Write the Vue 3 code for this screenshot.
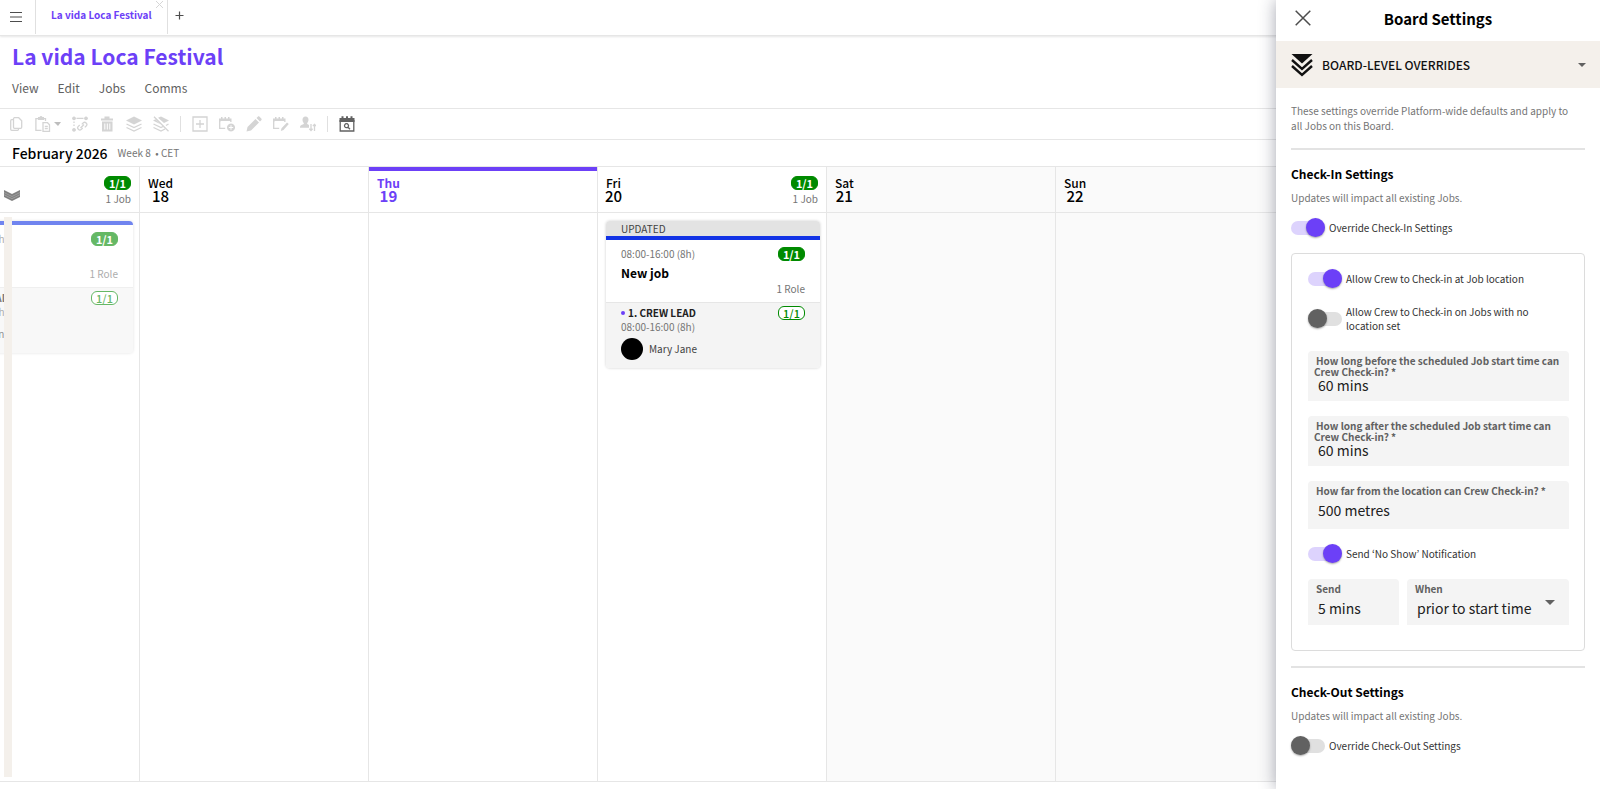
<template>
  <div class="app">
    <nav class="tabs">
      <button class="menu-btn" type="button" aria-label="Menu">
        <svg width="14" height="12" viewBox="0 0 14 12" stroke="#4d4d4d" stroke-width="1.2">
          <path d="M1 1.5h12M1 6h12M1 10.5h12" />
        </svg>
      </button>
      <div class="tab">
        <a href="#">{{ board }}</a>
        <button class="tab-close" type="button" aria-label="Close tab">
          <svg width="9" height="9" viewBox="0 0 9 9" stroke="#d6d6d6"><path d="M1 1l7 7M8 1l-7 7" /></svg>
        </button>
      </div>
      <button class="tab-add" type="button" aria-label="Add tab">
        <svg width="9" height="9" viewBox="0 0 9 9" stroke="#4d4d4d" stroke-width="1.2"><path d="M4.5 0.5v8M0.5 4.5h8" /></svg>
      </button>
    </nav>

    <header class="head">
      <h1>{{ board }}</h1>
      <div class="menus">
        <button v-for="m in menus" :key="m" type="button">{{ m }}</button>
      </div>
    </header>

    <div class="toolbar">
      <template v-for="tool in tools" :key="tool.name">
        <span v-if="tool.separator" class="sep"></span>
        <button v-else type="button" :class="{ active: tool.active }" :aria-label="tool.name">
          <svg width="16" height="16" viewBox="0 0 16 16" fill="none" stroke="currentColor" stroke-width="1.3">
            <path v-if="tool.line" :d="tool.line" />
            <path v-if="tool.solid" :d="tool.solid" fill="currentColor" fill-rule="evenodd" stroke="none" />
          </svg>
          <span v-if="tool.caret" class="caret"></span>
        </button>
      </template>
    </div>

    <div class="period">
      <h2>February 2026</h2>
      <span>Week 8 &nbsp;• CET</span>
    </div>

    <main class="board">
      <div class="days">
        <section
          v-for="day in days"
          :key="day.date"
          class="day"
          :class="{ today: day.today, weekend: day.weekend }"
        >
          <div class="day-head">
            <div v-if="day.name" class="day-label">
              <span class="day-name">{{ day.name }}</span>
              <span class="day-date">{{ day.date }}</span>
            </div>
            <div v-if="day.job" class="day-total">
              <span class="badge">1/1</span>
              <span class="muted">1 Job</span>
            </div>
          </div>
          <div class="day-body">
            <article v-if="day.job" class="card" :class="{ past: day.job.past }">
              <div v-if="day.job.updated" class="card-flag">UPDATED</div>
              <div class="card-job">
                <div class="row">
                  <span class="muted">08:00-16:00 (8h)</span>
                  <span class="badge">1/1</span>
                </div>
                <h3>New job</h3>
                <span class="roles muted">1 Role</span>
              </div>
              <div class="card-role">
                <div class="row">
                  <span class="role-name"><i></i>1. CREW LEAD</span>
                  <span class="badge outline">1/1</span>
                </div>
                <div class="muted">08:00-16:00 (8h)</div>
                <div class="crew"><span class="avatar"></span>Mary Jane</div>
              </div>
            </article>
          </div>
        </section>
      </div>
      <div class="drag-strip"></div>
      <button class="collapse" type="button" aria-label="Collapse rows">
        <svg width="16" height="11" viewBox="0 0 16 11">
          <path d="M0 0l8 4 8-4v7l-8 4-8-4z" fill="#808080" />
          <path d="M0 2.5l8 4 8-4M0 4.7l8 4 8-4" fill="none" stroke="#b0b0b0" stroke-width="0.6" />
        </svg>
      </button>
    </main>

    <aside class="panel">
      <div class="panel-head">
        <button type="button" aria-label="Close">
          <svg width="16" height="16" viewBox="0 0 16 16" stroke="#4d4d4d" stroke-width="1.5"><path d="M0.7 0.7l14.6 14.6M15.3 0.7L0.7 15.3" /></svg>
        </button>
        <h2>Board Settings</h2>
      </div>

      <button class="panel-section" type="button">
        <svg width="22" height="24" viewBox="0 0 22 24">
          <path d="M0.5 1h21L11 10.5z" fill="#111" />
          <path d="M1 7l10 9 10-9M1 13l10 9 10-9" fill="none" stroke="#111" stroke-width="2.4" />
        </svg>
        <span class="section-title">BOARD-LEVEL OVERRIDES</span>
        <span class="caret"></span>
      </button>

      <div class="panel-body">
        <p class="note">These settings override Platform-wide defaults and apply to all Jobs on this Board.</p>
        <hr />

        <h3>Check-In Settings</h3>
        <p class="note">Updates will impact all existing Jobs.</p>
        <label class="switch"><input v-model="checkIn" type="checkbox" /><span>Override Check-In Settings</span></label>

        <div class="box">
          <label class="switch"><input v-model="atLocation" type="checkbox" /><span>Allow Crew to Check-in at Job location</span></label>
          <label class="switch"><input v-model="noLocation" type="checkbox" /><span>Allow Crew to Check-in on Jobs with no location set</span></label>

          <div v-for="f in fields" :key="f.id" class="field" :class="{ wrapped: f.wrapped }">
            <label :for="f.id">{{ f.label }}</label>
            <input :id="f.id" v-model="f.value" type="text" />
          </div>

          <label class="switch"><input v-model="noShow" type="checkbox" /><span>Send ‘No Show’ Notification</span></label>

          <div class="field-row">
            <div class="field">
              <label for="send">Send</label>
              <input id="send" v-model="send" type="text" />
            </div>
            <div class="field when">
              <label for="when">When</label>
              <select id="when" v-model="when">
                <option>prior to start time</option>
              </select>
              <span class="caret"></span>
            </div>
          </div>
        </div>

        <hr />
        <h3>Check-Out Settings</h3>
        <p class="note">Updates will impact all existing Jobs.</p>
        <label class="switch"><input v-model="checkOut" type="checkbox" /><span>Override Check-Out Settings</span></label>
      </div>
    </aside>
  </div>
</template>

<script setup>
import { ref } from 'vue';

const board = 'La vida Loca Festival';
const menus = ['View', 'Edit', 'Jobs', 'Comms'];

const calendar = 'M0 2.5h2V1h1.5v1.5h2V1H7v1.5h2V1h1.5v1.5h2V6h-1.3V5H1.3v1H0z';

const tools = [
  { name: 'Copy', line: 'M6 1.7h4.7l3 3v6.6q0 1-1 1H6.5q-1 0-1-1V2.7q0-1 1-1M5.5 3.7H3.7q-1 0-1 1v8.6q0 1 1 1h5.8q1 0 1-1v-1' },
  {
    name: 'Paste',
    caret: true,
    line: 'M6.5 14.3H0.9V2.7h9.6V5M8 6.7h4.5l2 2v6.6H8zM9.8 10.3h3M9.8 12.5h3',
    solid: 'M3 1h1.5l1-1h1l1 1H9v3H3z',
  },
  {
    name: 'Link jobs',
    line: 'M4.5 2.4h7M2 5.5v1.5M2 8.5v1.5M8.5 12l3.5-3.5M9.8 8.4l1.6-1.6c1.7-1.5 4.6 1.2 3 3l-1.6 1.6M10.7 12l-1.6 1.6c-1.7 1.5-4.6-1.2-3-3L7.7 9',
    solid: 'M2 0.5a1.9 1.9 0 1 0 0.01 0zM14 0.5a1.9 1.9 0 1 0 0.01 0zM2 12a1.9 1.9 0 1 0 0.01 0z',
  },
  { name: 'Delete', solid: 'M2 2.5h3.5V0.5h5v2H14v2H2zM3 5.5h10.5V15.5H3zM5.3 7.5v6h1v-6zM7.8 7.5v6h1v-6zM10.3 7.5v6h1v-6z' },
  {
    name: 'Publish',
    line: 'M0.5 8l7.5 3.5 7.5-3.5M0.5 11.5L8 15l7.5-3.5',
    solid: 'M8 0.5l8 4-8 4-8-4z',
  },
  {
    name: 'Unpublish',
    line: 'M0.5 8l7.5 3.5 2-1M0.5 11.5L8 15l4-2M1 0.7l14.5 14.5M13 9.5l2.5-1.5',
    solid: 'M5 1.8L8 0.5l8 4-5 2.5zM0 4.5l2.5-1.3 5 5z',
  },
  { name: 'separator-1', separator: true },
  { name: 'Add job', line: 'M1 1h14v14H1zM8 4v8M4 8h8' },
  {
    name: 'Add to calendar',
    line: 'M0.7 4v8.3h5.5',
    solid: calendar + 'M12 7.5a4 4 0 1 0 0.01 0zM11.5 9.3h1v1.7h1.7v1h-1.7v1.7h-1V12H9.8v-1h1.7z',
  },
  { name: 'Edit', solid: 'M0.5 15.5l1-4.5 8-8 3.5 3.5-8 8zM10.5 2l1.3-1.3c.5-.5 1.2-.5 1.7 0l1.8 1.8c.5.5.5 1.2 0 1.7L14 5.5z' },
  {
    name: 'Edit schedule',
    line: 'M0.7 4v8.3h5.5',
    solid: calendar + 'M14 6.5l1.8 1.6-5.3 5.9-2.7.9.7-2.7z',
  },
  {
    name: 'Sort crew',
    line: 'M11 8v6.5M9.3 12.8l1.7 1.7 1.6-1.7M14.5 15V8.5M12.9 10l1.6-1.6L16 10',
    solid: 'M5.5 0.5c2 0 3 1.3 3 3.2 0 1.6-.8 2.5-1.3 3.2v1.2l1.8.9v2.8H0c0-2 .6-2.6 3.8-3.7V6.9C3.2 6.2 2.5 5.3 2.5 3.7c0-1.9 1-3.2 3-3.2z',
  },
  { name: 'separator-2', separator: true },
  {
    name: 'Find date',
    active: true,
    line: 'M1.2 4v11h13.6V4M7.5 7.7a2 2 0 1 0 0.01 0M9 11.2l2 2',
    solid: 'M0.5 2h2V0.3h2V2h2.5V0.3h2V2h2.5V0.3h2V2h2v4h-15z',
  },
];

const days = ref([
  { date: 17, job: { past: true } },
  { name: 'Wed', date: 18 },
  { name: 'Thu', date: 19, today: true },
  { name: 'Fri', date: 20, job: { updated: true } },
  { name: 'Sat', date: 21, weekend: true },
  { name: 'Sun', date: 22, weekend: true },
]);

const checkIn = ref(true);
const atLocation = ref(true);
const noLocation = ref(false);
const noShow = ref(true);
const checkOut = ref(false);
const send = ref('5 mins');
const when = ref('prior to start time');

const fields = ref([
  {
    id: 'before',
    label: 'How long before the scheduled Job start time can Crew Check-in? *',
    value: '60 mins',
    wrapped: true,
  },
  {
    id: 'after',
    label: 'How long after the scheduled Job start time can Crew Check-in? *',
    value: '60 mins',
    wrapped: true,
  },
  { id: 'distance', label: 'How far from the location can Crew Check-in? *', value: '500 metres' },
]);
</script>

<style>
body {
  margin: 0;
}
</style>

<style scoped>
* {
  box-sizing: border-box;
}

.app {
  position: relative;
  display: flex;
  flex-direction: column;
  height: 100vh;
  overflow: hidden;
  background: #fff;
  color: #000;
  font-family: 'Noto Sans CJK KR', 'Noto Sans', sans-serif;
  font-size: 12px;
  line-height: 14px;
}

h1,
h2,
h3,
p {
  margin: 0;
}

button,
input,
select {
  margin: 0;
  padding: 0;
  border: 0;
  background: none;
  color: inherit;
  font: inherit;
}

svg {
  display: block;
}

.caret {
  border: 4px solid transparent;
  border-top-color: currentColor;
  border-bottom: 0;
}

.muted {
  color: #757575;
}

/* tabs */
.tabs {
  display: flex;
  align-items: center;
  height: 36px;
  flex-shrink: 0;
  padding-bottom: 2px;
  border-bottom: 1px solid #e6e6e6;
  box-shadow: 0 1px 2px rgba(0, 0, 0, 0.1);
}

.menu-btn {
  padding: 0 12px 0 9px;
}

.tab {
  position: relative;
  display: flex;
  align-items: center;
  height: 34px;
  padding: 0 15px 4px;
  border: 1px solid #e0e0e0;
  border-width: 0 1px;
}

.tab a {
  color: #6c40f7;
  font-size: 10px;
  font-weight: 700;
  text-decoration: none;
}

.tab-close {
  position: absolute;
  top: 0;
  right: 3px;
}

.tab-add {
  padding: 0 7px 2px;
}

/* heading */
.head {
  height: 72px;
  flex-shrink: 0;
  padding: 7px 12px 0;
}

.head h1 {
  color: #6c40f7;
  font-size: 21px;
  line-height: 26px;
  font-weight: 700;
}

.menus {
  display: flex;
  gap: 19px;
  margin-top: 10px;
  color: #616161;
  font-size: 12px;
  line-height: 18px;
}

.toolbar {
  display: flex;
  align-items: center;
  gap: 11px;
  height: 32px;
  flex-shrink: 0;
  padding-left: 8px;
  border: 1px solid #e6e6e6;
  border-width: 1px 0;
  color: #d4d4d4;
}

.toolbar button {
  display: flex;
  align-items: center;
  gap: 3px;
}

.toolbar .caret {
  border-width: 4px 3px 0 4px;
  border-top-color: #bdbdbd;
}

.toolbar .active {
  color: #616161;
}

.sep {
  width: 1px;
  height: 16px;
  background: #e0e0e0;
}

.period {
  display: flex;
  align-items: center;
  gap: 10px;
  height: 26px;
  flex-shrink: 0;
  padding-left: 12px;
  color: #757575;
  font-size: 10px;
}

.period h2 {
  color: #000;
  font-size: 14px;
  font-weight: 500;
}

/* board */
.board {
  position: relative;
  flex: 1;
  min-height: 0;
  margin-bottom: 7px;
  overflow: hidden;
  border: 1px solid #e6e6e6;
  border-width: 1px 0;
}

.days {
  display: flex;
  height: 100%;
  margin-left: -89px;
}

.day {
  display: flex;
  flex-direction: column;
  flex: 0 0 229px;
  border-right: 1px solid #e6e6e6;
}

.day:last-child {
  flex: 1 0 229px;
}

.weekend {
  background: #fafafa;
}

.day-head {
  display: flex;
  justify-content: space-between;
  height: 46px;
  padding: 9px 8px 0;
  border-bottom: 1px solid #e6e6e6;
}

.day-label {
  display: flex;
  flex-direction: column;
  align-items: center;
  font-weight: 500;
}

/* the date stays centred under the name, even when it is the wider one */
.day-date {
  margin: 0 -4px;
  font-size: 15px;
  line-height: 11px;
}

.today .day-head {
  padding-top: 5px;
  border-top: 4px solid #6c40f7;
  color: #6c40f7;
}

.today .day-label {
  font-weight: 700;
}

.day-total {
  display: flex;
  flex-direction: column;
  align-items: flex-end;
  gap: 2px;
  margin-left: auto;
  font-size: 10px;
}

.badge {
  width: 27px;
  height: 14px;
  border: 1px solid #008a00;
  border-radius: 6px;
  background: #008a00;
  color: #fff;
  font-size: 11px;
  line-height: 12px;
  font-weight: 700;
  text-align: center;
}

.badge.outline {
  background: #fff;
  color: #008a00;
  font-weight: 500;
}

.day-body {
  padding: 8px 6px 0 8px;
}

.card {
  overflow: hidden;
  border-radius: 4px;
  box-shadow: 0 0 3px rgba(0, 0, 0, 0.2);
  font-size: 10px;
}

.card.past {
  opacity: 0.6;
}

.card-flag {
  height: 15px;
  padding-left: 15px;
  background: #e3e3e3;
  color: #424242;
  line-height: 15px;
}

.card-job {
  height: 66px;
  padding: 7px 15px 0;
  border-top: 4px solid #1233e6;
  background: #fff;
}

.row {
  display: flex;
  justify-content: space-between;
}

.card h3 {
  margin: 5px 0 2px;
  font-size: 12px;
  font-weight: 700;
}

.roles {
  display: block;
  text-align: right;
}

.card-role {
  height: 66px;
  padding: 3px 15px 0;
  border-top: 1px solid #e6e6e6;
  background: #f4f4f4;
}

.role-name {
  display: flex;
  align-items: center;
  gap: 3px;
  color: #212121;
  font-weight: 700;
}

.role-name i {
  width: 4px;
  height: 4px;
  border-radius: 50%;
  background: #6c40f7;
}

.crew {
  display: flex;
  align-items: center;
  gap: 6px;
  margin-top: 4px;
  color: #424242;
}

.avatar {
  width: 22px;
  height: 22px;
  border-radius: 50%;
  background: #000;
}

.drag-strip {
  position: absolute;
  top: 50px;
  bottom: 4px;
  left: 4px;
  width: 8px;
  background: #f4f0eb;
}

.collapse {
  position: absolute;
  top: 23px;
  left: 4px;
}

/* settings panel */
.panel {
  position: absolute;
  top: 0;
  right: 0;
  bottom: 0;
  width: 324px;
  overflow: hidden auto;
  background: #fff;
  box-shadow: 0 0 16px rgba(30, 35, 60, 0.4);
}

.panel-head {
  position: relative;
  display: flex;
  align-items: center;
  justify-content: center;
  height: 41px;
  padding-bottom: 4px;
}

.panel-head button {
  position: absolute;
  top: 10px;
  left: 19px;
}

.panel-head h2 {
  font-size: 15px;
  font-weight: 700;
}

.panel-section {
  display: flex;
  align-items: center;
  gap: 9px;
  width: 100%;
  height: 47px;
  padding: 0 14px 0 15px;
  background: #f4f0eb;
  color: #616161;
}

.section-title {
  flex: 1;
  color: #111;
  font-size: 12px;
  font-weight: 500;
  text-align: left;
}

.panel-body {
  padding: 15px 15px 0;
}

.note {
  padding-right: 8px;
  color: #757575;
  font-size: 10px;
  line-height: 15px;
}

hr {
  height: 2px;
  margin: 15px 0 16px;
  border: 0;
  background: #e3e3e3;
}

.panel-body h3 {
  margin-bottom: 8px;
  font-size: 12px;
  line-height: 16px;
  font-weight: 700;
}

.switch {
  display: flex;
  align-items: center;
  gap: 4px;
  min-height: 20px;
  padding-right: 8px;
  color: #333;
  font-size: 10px;
  line-height: 14px;
}

.switch input {
  position: relative;
  flex-shrink: 0;
  width: 34px;
  height: 14px;
  border-radius: 7px;
  background: #e0e0e0;
  appearance: none;
}

.switch input::before {
  content: '';
  position: absolute;
  top: -3px;
  left: 0;
  width: 19px;
  height: 19px;
  border-radius: 50%;
  background: #616161;
  box-shadow: 0 1px 2px rgba(0, 0, 0, 0.35);
}

.switch input:checked {
  background: #ddd3fd;
}

.switch input:checked::before {
  left: 15px;
  background: #6c40f7;
}

.note + .switch {
  margin-top: 13px;
}

.box {
  display: flex;
  flex-direction: column;
  gap: 15px;
  margin-top: 15px;
  padding: 15px 15px 25px 16px;
  border: 1px solid #dcdcdc;
  border-radius: 4px;
}

.box .switch + .switch {
  margin: 1px 0 3px;
}

.field {
  position: relative;
  display: flex;
  flex-direction: column;
  padding: 4px 6px 5px;
  border-radius: 4px 4px 0 0;
  background: #f4f4f4;
}

.field label {
  color: #616161;
  font-size: 10px;
  line-height: 11px;
  font-weight: 700;
  text-indent: 2px;
}

.field input,
.field select {
  width: 100%;
  height: 28px;
  padding-left: 4px;
  color: #212121;
  font-size: 14px;
  line-height: 24px;
  appearance: none;
}

.field.wrapped {
  padding-bottom: 8px;
}

.field.wrapped input {
  height: 16px;
}

.field-row {
  display: grid;
  grid-template-columns: 91fr 162fr;
  gap: 8px;
}

.field-row .field {
  padding-bottom: 3px;
}

.when .caret {
  position: absolute;
  top: 21px;
  right: 14px;
  border-width: 5px 5px 0;
  color: #616161;
}
</style>
